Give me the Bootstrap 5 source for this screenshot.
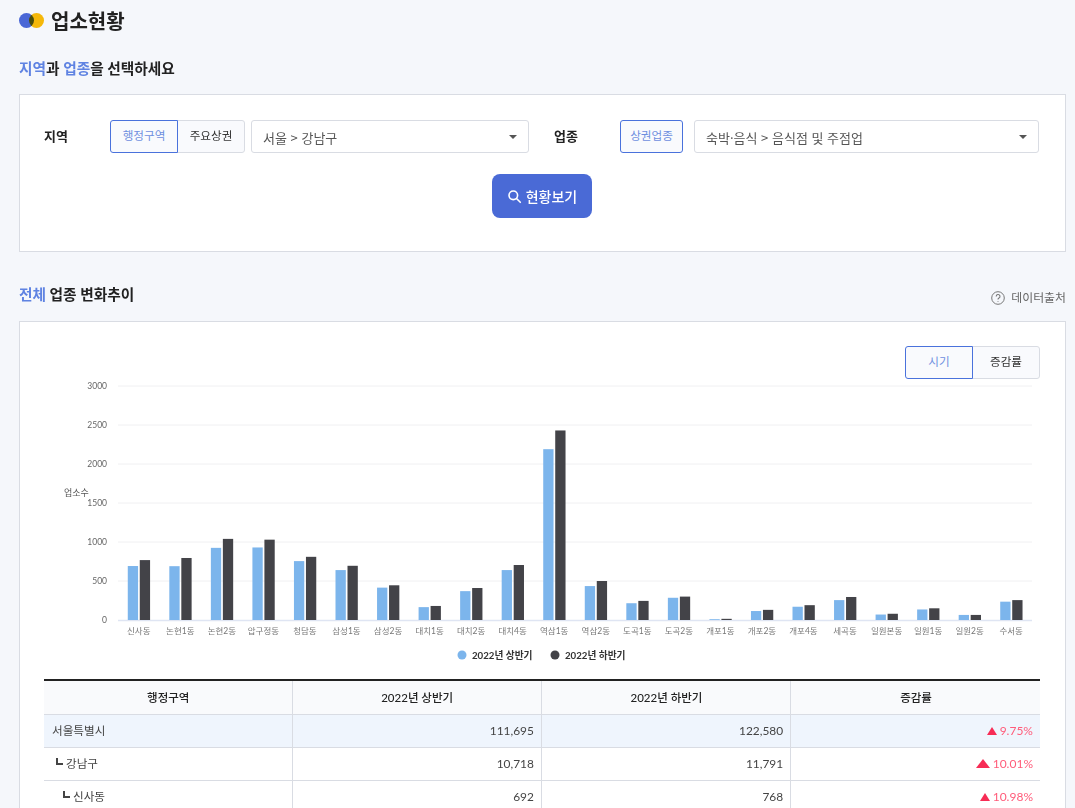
<!DOCTYPE html>
<html lang="ko">
<head>
<meta charset="utf-8">
<title>업소현황</title>
<link href="https://cdn.jsdelivr.net/npm/bootstrap@5.3.0/dist/css/bootstrap.min.css" rel="stylesheet">
<style>
html,body{height:100%;overflow:hidden}
body{background:#f5f7fb;font-family:Lato,"Noto Sans CJK KR",sans-serif;color:#222;font-size:13px}
.page-wrap{height:808px;overflow:hidden;padding:0 9px 0 19px}
.page-head{height:43px;gap:7px}
.logo-dots{width:25px;height:16px;flex:none;position:relative}
.logo-dots i{position:absolute;top:-1px;width:15px;height:15px;border-radius:50%}
.logo-dots .dot-a{left:0;background:#4a67d6}
.logo-dots .dot-b{left:10px;background:#ffbe0a;mix-blend-mode:multiply}
.page-title{font-size:20px;font-weight:700;margin:0;color:#222;line-height:1;transform:translateY(-1px)}
.sec-title{font-size:14.7px;font-weight:700;margin:0;color:#222;line-height:22px}
.sec-first{margin-top:14px}
.accent{color:#5f83e2}
.panel-box{background:#fff;border:1px solid #d9dce3}
.filter-box{margin-top:15px;height:158px;padding:25px 26px 0 24px}
.field-label{width:66px;font-weight:700;font-size:13px;flex:none}
.seg-btn{height:33px;width:68px;padding:0 0 2px;font-size:11.6px;background:#f9fafd;color:#333;border:1px solid #d9dce3;border-radius:3px;line-height:1}
.seg-btn.on{color:#6f8fdf;border-color:#4a72dc;position:relative;z-index:1}
.seg-group .seg-btn:first-child{border-radius:3px 0 0 3px}
.seg-group .seg-btn:last-child{border-radius:0 3px 3px 0;margin-left:-1px}
.single-seg{width:64px;border-radius:3px}
.pick-select{height:33px;font-size:13px;font-family:"Noto Sans CJK KR",Lato,sans-serif;color:#555;border:1px solid #d9dce3;border-radius:3px;padding:3px 30px 0 11px;background-size:8px 4px;background-position:right 11px center;box-shadow:none;
 background-image:url("data:image/svg+xml,%3Csvg xmlns='http://www.w3.org/2000/svg' viewBox='0 0 10 5'%3E%3Cpath fill='%23555' d='M0 0h10L5 5z'/%3E%3C/svg%3E")}
.select-a{width:278px;margin:0 25px 0 6px;flex:none}
.select-b{width:345px;margin-left:11px;flex:none}
.go-btn{width:100px;height:44px;margin-top:21px;background:#4a6ad6;border:0;border-radius:8px;color:#fff;font-weight:500;font-size:14px;gap:4px;padding:0 0 0 1px}
.go-btn:hover{background:#4a6ad6;color:#fff}
.trend-head{margin-top:31px;height:22px}
.source-link{font-size:11.9px;color:#666;gap:6px;padding-top:7px}
.chart-box{margin-top:16px;height:600px;padding:24px 25px 0 24px}
.mini-seg{width:135px}
.chart-svg{display:block;width:996px;height:299px;margin-top:1px}
.chart-svg text{font-family:Lato,"Noto Sans CJK KR",sans-serif}
.data-table{table-layout:fixed;width:996px;font-size:11.6px;margin:0;border-top:2px solid #222;color:#444}
.data-table th,.data-table td{height:33px;padding:0 7px 0 8px;border:1px solid #d9dce3;border-top:0;vertical-align:middle;line-height:1;box-shadow:none;background:transparent;color:#444}
.data-table tr>*:first-child{border-left:0}
.data-table tr>*:last-child{border-right:0}
.data-table thead th{height:34px;background:#f9fafc;font-weight:500;text-align:center;color:#222;font-size:11.5px}
.data-table thead th.col-first{width:248px}
.data-table .row-hi td{background:#eff5fd}
.data-table td.num{text-align:right;font-size:11.9px}
.data-table td.up{text-align:right;color:#ff5c7a;font-size:12px}
.tri{display:inline-block;width:0;height:0;border:solid transparent;border-width:0 5.5px 8px;border-bottom-color:#f72c55;margin-right:3px}
.tri-lg{border-width:0 7px 9px}
.tree-mark{display:inline-block;width:7px;height:7px;border-left:2px solid #444;border-bottom:2px solid #444;margin:0 3px 3px 4px}
.tree-deep{margin-left:11px}
</style>
</head>
<body>
<div class="page-wrap">
  <div class="page-head d-flex align-items-center">
    <span class="logo-dots"><i class="dot-a"></i><i class="dot-b"></i></span>
    <h1 class="page-title">업소현황</h1>
  </div>
  <h2 class="sec-title sec-first"><span class="accent">지역</span>과 <span class="accent">업종</span>을 선택하세요</h2>

  <div class="panel-box filter-box">
    <div class="d-flex align-items-center">
      <div class="field-label">지역</div>
      <div class="seg-group d-flex">
        <button type="button" class="btn seg-btn on">행정구역</button>
        <button type="button" class="btn seg-btn">주요상권</button>
      </div>
      <select class="form-select pick-select select-a"><option>서울 &gt; 강남구</option></select>
      <div class="field-label">업종</div>
      <button type="button" class="btn seg-btn on single-seg">상권업종</button>
      <select class="form-select pick-select select-b"><option>숙박·음식 &gt; 음식점 및 주점업</option></select>
    </div>
    <div class="d-flex justify-content-center">
      <button type="button" class="btn go-btn d-inline-flex align-items-center justify-content-center">
        <svg width="15" height="15" viewBox="0 0 15 15" fill="none" stroke="#fff" stroke-width="1.6" stroke-linecap="round"><circle cx="6.3" cy="6.3" r="4.3"/><path d="M9.5 9.5l3.8 3.8"/></svg>
        현황보기
      </button>
    </div>
  </div>

  <div class="trend-head d-flex justify-content-between align-items-center">
    <h2 class="sec-title"><span class="accent">전체</span> 업종 변화추이</h2>
    <div class="source-link d-flex align-items-center">
      <svg width="14" height="14" viewBox="0 0 14 14" fill="none" stroke="#777"><circle cx="7" cy="7" r="6.3"/><path d="M5.2 5.5a1.9 1.9 0 1 1 2.8 1.6c-.7.4-1 .8-1 1.5" stroke-width="1.1"/><circle cx="7" cy="10.4" r=".5" fill="#777" stroke="none"/></svg>
      데이터출처
    </div>
  </div>

  <div class="panel-box chart-box">
    <div class="d-flex justify-content-end">
      <div class="seg-group mini-seg d-flex">
        <button type="button" class="btn seg-btn on">시기</button>
        <button type="button" class="btn seg-btn">증감률</button>
      </div>
    </div>
    <svg id="trendChart" class="chart-svg" viewBox="44 380 996 299" role="img" aria-label="행정구역별 업소 수"></svg>

    <table class="table data-table mt-0">
      <thead><tr><th class="col-first">행정구역</th><th>2022년 상반기</th><th>2022년 하반기</th><th>증감률</th></tr></thead>
      <tbody>
        <tr class="row-hi"><td>서울특별시</td><td class="num">111,695</td><td class="num">122,580</td><td class="up"><span class="tri"></span>9.75%</td></tr>
        <tr><td><span class="tree-mark"></span>강남구</td><td class="num">10,718</td><td class="num">11,791</td><td class="up"><span class="tri tri-lg"></span>10.01%</td></tr>
        <tr><td><span class="tree-mark tree-deep"></span>신사동</td><td class="num">692</td><td class="num">768</td><td class="up"><span class="tri"></span>10.98%</td></tr>
      </tbody>
    </table>
  </div>
</div>
<script src="https://cdn.jsdelivr.net/npm/bootstrap@5.3.0/dist/js/bootstrap.bundle.min.js"></script>
<script>
(function(){
  var d=[["신사동",692,768],["논현1동",690,795],["논현2동",925,1040],["압구정동",930,1030],["청담동",755,810],["삼성1동",640,695],["삼성2동",415,445],["대치1동",165,180],["대치2동",370,410],["대치4동",640,705],["역삼1동",2190,2430],["역삼2동",435,500],["도곡1동",215,245],["도곡2동",285,300],["개포1동",10,15],["개포2동",115,130],["개포4동",170,190],["세곡동",255,295],["일원본동",70,80],["일원1동",135,150],["일원2동",65,65],["수서동",235,255]];
  var x0=118,x1=1032,y0=620,k=0.078,w=(x1-x0)/22,s='';
  for(var v=500;v<=3000;v+=500){var y=y0-v*k;s+='<line x1="'+x0+'" x2="'+x1+'" y1="'+y+'" y2="'+y+'" stroke="#f0f0f2"/>';}
  for(v=0;v<=3000;v+=500){s+='<text x="107" y="'+(y0-v*k+3)+'" text-anchor="end" font-size="8.5" fill="#666">'+v+'</text>';}
  s+='<text x="64" y="496" font-size="9" fill="#555">업소수</text>';
  s+='<line x1="'+x0+'" x2="'+x1+'" y1="620.5" y2="620.5" stroke="#dfe5f3" stroke-width="1.5"/>';
  d.forEach(function(r,i){
    var c=x0+w*(i+.5);
    s+='<rect x="'+(c-11)+'" y="'+(y0-r[1]*k)+'" width="10.3" height="'+(r[1]*k)+'" fill="#7cb5ec"/>';
    s+='<rect x="'+(c+1)+'" y="'+(y0-r[2]*k)+'" width="10.3" height="'+(r[2]*k)+'" fill="#434348"/>';
    s+='<text x="'+c+'" y="634" text-anchor="middle" font-size="8.5" fill="#777">'+r[0]+'</text>';
  });
  s+='<circle cx="462" cy="655" r="4.5" fill="#7cb5ec"/><text x="472" y="659" font-size="9.7" font-weight="700" fill="#333">2022년 상반기</text>';
  s+='<circle cx="555" cy="655" r="4.5" fill="#434348"/><text x="565" y="659" font-size="9.7" font-weight="700" fill="#333">2022년 하반기</text>';
  document.getElementById('trendChart').innerHTML=s;
})();
</script>
</body>
</html>
